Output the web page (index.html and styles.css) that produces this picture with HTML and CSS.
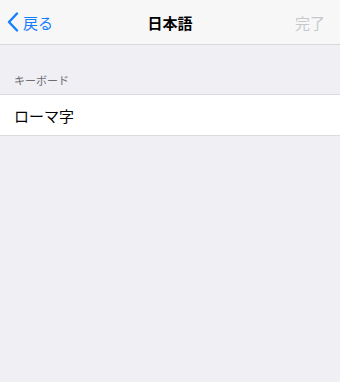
FILE: index.html
```html
<!DOCTYPE html>
<html lang="ja">
<head>
  <meta charset="utf-8">
  <title>日本語</title>
  <link rel="stylesheet" href="styles.css">
</head>
<body>
  <div class="navbar">
    <div class="nav-back">
      <svg width="12" height="20" viewBox="0 0 12 20"><path d="M10 1.5 L2 10 L10 18.5" fill="none" stroke="#157efb" stroke-width="2.4" stroke-linecap="round" stroke-linejoin="round"/></svg>
      <span>戻る</span>
    </div>
    <div class="nav-title">日本語</div>
    <div class="nav-done">完了</div>
  </div>

  <div class="section-header">キーボード</div>
  <div class="list">
    <div class="list-row">ローマ字</div>
  </div>
</body>
</html>
```

FILE: styles.css
```css
* {
  box-sizing: border-box;
}

body {
  margin: 0;
  background: #efeff4;
  font-family: "Noto Sans CJK JP", "Noto Sans", sans-serif;
  height: 382px;
}

.navbar {
  height: 45px;
  background: #f7f7f8;
  border-bottom: 1px solid #d8d8dc;
  display: flex;
  align-items: center;
  justify-content: space-between;
  padding: 0 15px 0 7px;
  position: relative;
}

.nav-back {
  display: flex;
  align-items: center;
  gap: 4px;
  color: #157efb;
  font-size: 15px;
}

.nav-back svg {
  display: block;
}

.nav-title {
  position: absolute;
  left: 0;
  right: 0;
  text-align: center;
  font-size: 15px;
  font-weight: bold;
  color: #000;
  pointer-events: none;
}

.nav-done {
  color: #c8c8cc;
  font-size: 15px;
}

.section-header {
  padding: 27px 15px 6px 14px;
  font-size: 11px;
  color: #6d6d72;
  line-height: 16px;
}

.list {
  background: #fff;
  border-top: 1px solid #dcdce0;
  border-bottom: 1px solid #dcdce0;
}

.list-row {
  height: 40px;
  display: flex;
  align-items: center;
  padding-left: 14px;
  font-size: 15px;
  color: #000;
}
```
